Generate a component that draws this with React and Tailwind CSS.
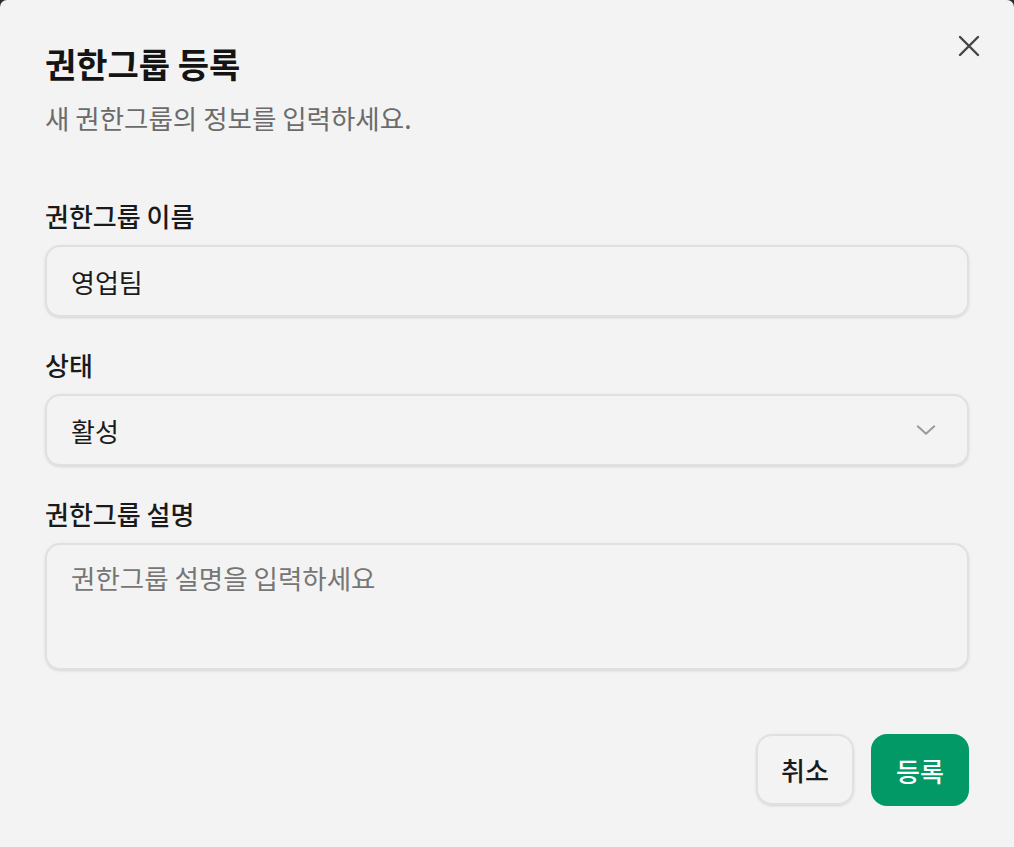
import React from 'react';

const FONT = { fontFamily: '"Noto Sans CJK KR", "Noto Sans", sans-serif' };

function Field({ label, children }) {
    return (
        <div className="flex flex-col gap-[11px]">
            <label className="text-[26px] leading-[36px] font-medium text-[#1a1a1a]">{label}</label>
            {children}
        </div>
    );
}

export default function App() {
    return (
        <div className="min-h-screen bg-[#2b2b2b]" style={FONT}>
            <div className="relative h-[847px] w-full bg-[#f3f3f3] rounded-t-[7px] px-[45px] pt-[44px]">
                {/* Close button */}
                <button className="absolute right-[31px] top-[32px] p-[2px] text-[#444]">
                    <svg width="24" height="24" viewBox="0 0 24 24" fill="none" stroke="currentColor" strokeWidth="2.4" strokeLinecap="round">
                        <path d="M3 3l18 18M21 3L3 21" />
                    </svg>
                </button>

                {/* Header */}
                <h2 className="text-[34px] leading-[40px] font-bold text-[#141414]">권한그룹 등록</h2>
                <p className="mt-[16px] text-[26.5px] leading-[36px] text-[#6b6b6b]">새 권한그룹의 정보를 입력하세요.</p>

                {/* Form */}
                <div className="mt-[62px] flex flex-col gap-[30px]">
                    <Field label="권한그룹 이름">
                        <div className="h-[72px] flex items-center px-[24px] rounded-[15px] border-2 border-[#e0e0e0] shadow-sm text-[26px] text-[#1a1a1a]">
                            영업팀
                        </div>
                    </Field>

                    <Field label="상태">
                        <div className="h-[72px] flex items-center justify-between pl-[24px] pr-[30px] rounded-[15px] border-2 border-[#e0e0e0] shadow-sm text-[26px] text-[#1a1a1a]">
                            <span>활성</span>
                            <svg width="22" height="22" viewBox="0 0 24 24" fill="none" stroke="#9a9a9a" strokeWidth="2.2" strokeLinecap="round" strokeLinejoin="round">
                                <path d="M3 8l9 8 9-8" />
                            </svg>
                        </div>
                    </Field>

                    <Field label="권한그룹 설명">
                        <div className="h-[127px] px-[24px] pt-[15px] rounded-[15px] border-2 border-[#e0e0e0] shadow-sm text-[26.5px] leading-[36px] text-[#767676]">
                            권한그룹 설명을 입력하세요
                        </div>
                    </Field>
                </div>

                {/* Footer */}
                <div className="mt-[64px] flex justify-end gap-[17px]">
                    <button className="h-[71px] w-[98px] rounded-[16px] border-2 border-[#e0e0e0] shadow-sm text-[26px] font-medium text-[#1a1a1a]">
                        취소
                    </button>
                    <button className="h-[72px] w-[98px] rounded-[16px] bg-[#039966] text-[26px] font-medium text-white">
                        등록
                    </button>
                </div>
            </div>
        </div>
    );
}
